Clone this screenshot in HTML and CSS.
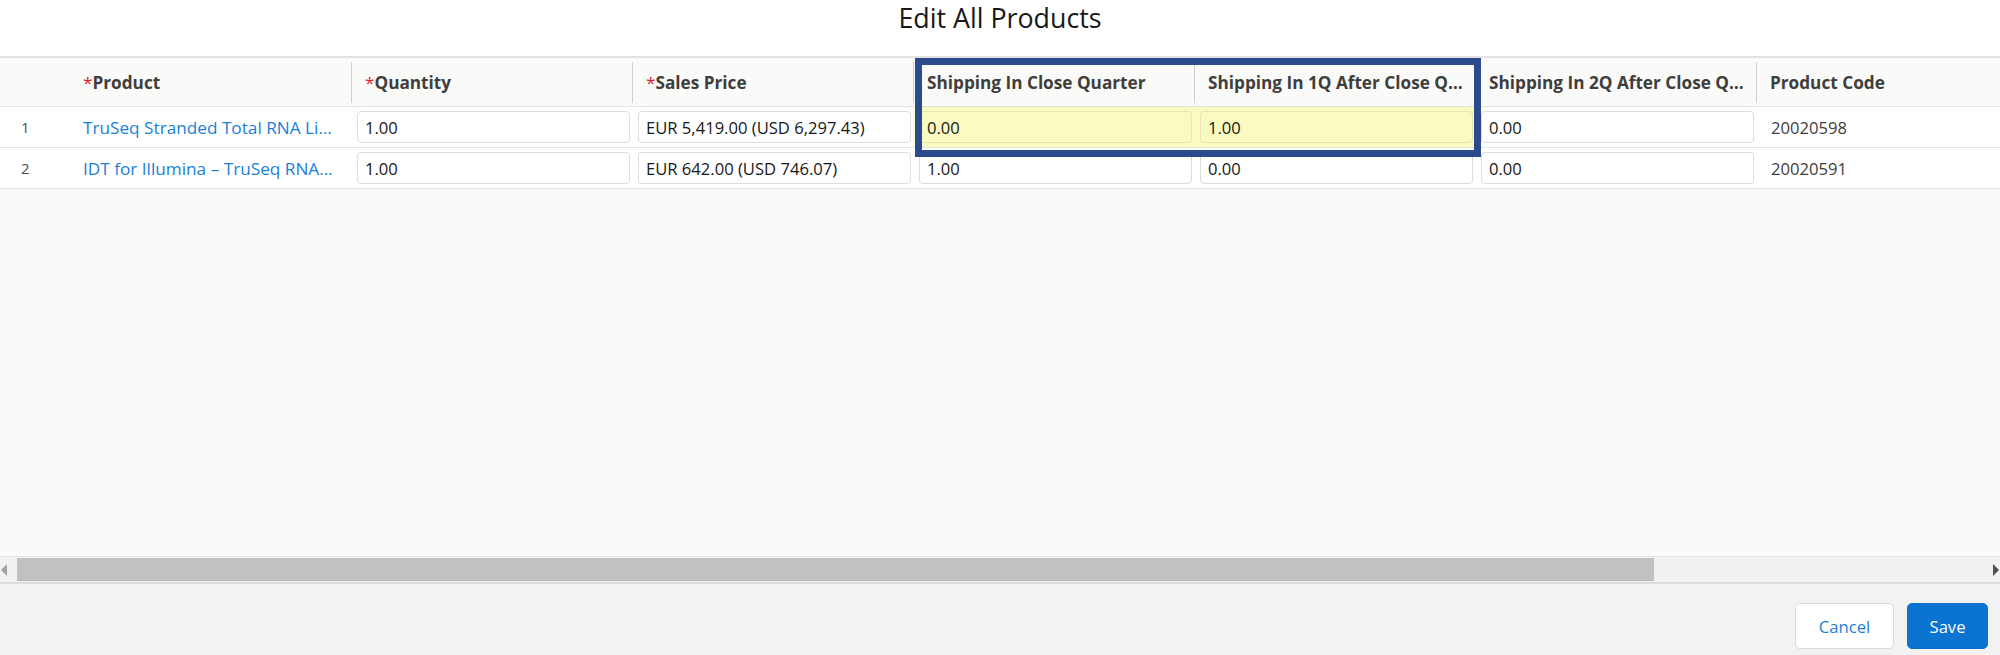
FILE: index.html
```html
<!DOCTYPE html>
<html lang="en">
<head>
<meta charset="utf-8">
<title>Edit All Products</title>
<link rel="stylesheet" href="styles.css">
</head>
<body>
<div class="modal">
  <header class="modal-header">
    <h1 class="modal-title">Edit All Products</h1>
  </header>
  <section class="table-area">
    <div class="grid-viewport">
      <div class="grid">
        <div class="row row-head">
          <div class="hcell hcell-num"></div>
          <div class="hcell hcell-product"><span class="req">*</span>Product</div>
          <div class="hcell"><span class="req">*</span>Quantity</div>
          <div class="hcell"><span class="req">*</span>Sales Price</div>
          <div class="hcell">Shipping In Close Quarter</div>
          <div class="hcell">Shipping In 1Q After Close Q…</div>
          <div class="hcell">Shipping In 2Q After Close Q…</div>
          <div class="hcell hcell-last">Product Code</div>
        </div>
        <div class="row">
          <div class="cell cell-num">1</div>
          <div class="cell cell-product"><a class="link" href="#">TruSeq Stranded Total RNA Li…</a></div>
          <div class="cell"><div class="field">1.00</div></div>
          <div class="cell"><div class="field">EUR 5,419.00 (USD 6,297.43)</div></div>
          <div class="cell cell-edited"><div class="field field-edited">0.00</div></div>
          <div class="cell cell-edited"><div class="field field-edited">1.00</div></div>
          <div class="cell"><div class="field">0.00</div></div>
          <div class="cell cell-text">20020598</div>
        </div>
        <div class="row">
          <div class="cell cell-num">2</div>
          <div class="cell cell-product"><a class="link" href="#">IDT for Illumina – TruSeq RNA…</a></div>
          <div class="cell"><div class="field">1.00</div></div>
          <div class="cell"><div class="field">EUR 642.00 (USD 746.07)</div></div>
          <div class="cell"><div class="field">1.00</div></div>
          <div class="cell"><div class="field">0.00</div></div>
          <div class="cell"><div class="field">0.00</div></div>
          <div class="cell cell-text">20020591</div>
        </div>
      </div>
      <div class="highlight"></div>
    </div>
    <div class="empty"></div>
    <div class="hscroll">
      <div class="hscroll-btn"><span class="arrow-left"></span></div>
      <div class="hscroll-track"><div class="hscroll-thumb"></div></div>
      <div class="hscroll-btn"><span class="arrow-right"></span></div>
    </div>
  </section>
  <footer class="modal-footer">
    <button class="btn btn-neutral" type="button">Cancel</button>
    <button class="btn btn-brand" type="button">Save</button>
  </footer>
</div>
</body>
</html>
```

FILE: styles.css
```css
* { box-sizing: border-box; }

html, body {
  margin: 0;
  padding: 0;
  width: 2000px;
  height: 655px;
  overflow: hidden;
  background: #ffffff;
}

body {
  font-family: "Open Sans", "Noto Sans", sans-serif;
  font-size: 16.6px;
  color: #080707;
}

.modal {
  display: flex;
  flex-direction: column;
  height: 655px;
}

.modal-header {
  height: 56px;
  background: #ffffff;
  display: flex;
  justify-content: center;
  align-items: flex-start;
}

.modal-title {
  margin: 0;
  font-weight: 400;
  font-size: 26.8px;
  line-height: 35px;
  color: #181818;
}

.table-area {
  flex: 1;
  display: flex;
  flex-direction: column;
  border-top: 2px solid #e2e2e2;
  background: #fafafa;
  min-height: 0;
}

.grid-viewport {
  position: relative;
  overflow: hidden;
  width: 2000px;
}

.grid {
  width: 2000px;
}

.row {
  display: grid;
  grid-template-columns: 60px 292px 281px 281px 281px 281px 281px 243px;
  border-bottom: 1px solid #e3e3e3;
  background: #ffffff;
}

.row-head {
  height: 49px;
  background: #fafaf9;
  align-items: stretch;
}

.hcell {
  display: flex;
  align-items: center;
  margin: 4px 0 3px;
  padding-left: 13px;
  border-right: 1px solid #cfcfcf;
  font-size: 17.2px;
  font-weight: 700;
  color: #3e3e3c;
  white-space: nowrap;
  overflow: hidden;
}

.hcell-num,
.hcell-last {
  border-right: none;
}

.hcell-product {
  padding-left: 23px;
}

.req {
  color: #d8232a;
  font-weight: 400;
}

.cell {
  height: 40px;
  padding: 4px 3px 4px 5px;
  display: flex;
  align-items: center;
  white-space: nowrap;
  overflow: hidden;
}

.cell-num {
  padding-left: 21px;
  color: #514f4d;
  font-size: 15px;
}

.cell-product {
  padding-left: 23px;
  font-size: 17.2px;
}

.cell-text {
  padding-left: 14px;
  color: #3e3e3c;
}

.cell-edited {
  background: #f9fbc0;
}

.link {
  color: #1a7fd6;
  text-decoration: none;
}

.field {
  width: 100%;
  height: 32px;
  display: flex;
  align-items: center;
  padding-left: 7px;
  border: 1px solid #dedcdb;
  border-radius: 4px;
  background: #ffffff;
  color: #181818;
}

.field-edited {
  background: #f9fbc0;
  border-color: #e6e6b4;
}

.highlight {
  position: absolute;
  left: 915px;
  top: 0px;
  width: 566px;
  height: 99px;
  border: 7px solid #2b4b8c;
  pointer-events: none;
}

.empty {
  flex: 1;
  background: #fafafa;
}

.hscroll {
  height: 26px;
  display: flex;
  background: #f1f1f1;
  border-top: 1px solid #e6e6e6;
}

.hscroll-btn {
  width: 17px;
  display: flex;
  align-items: center;
  justify-content: center;
}

.hscroll-track {
  flex: 1;
  padding: 1px 0;
  display: flex;
}

.hscroll-thumb {
  width: 1637px;
  background: #c1c1c1;
  border-bottom: 1px solid #b8b8b8;
}

.arrow-left {
  width: 0;
  height: 0;
  border-top: 6px solid transparent;
  border-bottom: 6px solid transparent;
  border-right: 6px solid #a3a3a3;
  margin-right: 10px;
}

.arrow-right {
  width: 0;
  height: 0;
  border-top: 6px solid transparent;
  border-bottom: 6px solid transparent;
  border-left: 6px solid #505050;
  margin-left: 8px;
}

.modal-footer {
  height: 73px;
  border-top: 2px solid #dcdcdc;
  background: #f3f2f2;
  display: flex;
  justify-content: flex-end;
  align-items: flex-start;
  padding: 19px 12px 0 0;
  gap: 13px;
}

.btn {
  height: 46px;
  border-radius: 5px;
  font-family: "Open Sans", "Noto Sans", sans-serif;
  font-size: 16.6px;
  padding: 0;
  cursor: pointer;
}

.btn-neutral {
  width: 99px;
  background: #ffffff;
  border: 1px solid #dddbda;
  color: #1a7fd6;
}

.btn-brand {
  width: 81px;
  background: #0b73d0;
  border: 1px solid #0b73d0;
  color: #ffffff;
}
```
